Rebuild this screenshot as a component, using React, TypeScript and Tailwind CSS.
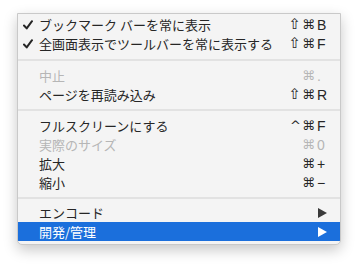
import React from "react";

type Item =
  | { sep: true; h: number }
  | {
      sep?: false;
      label: string;
      check?: boolean;
      disabled?: boolean;
      mods?: string;
      key?: string;
      arrow?: boolean;
      active?: boolean;
    };

const items: Item[] = [
  { label: "ブックマーク バーを常に表示", check: true, mods: "⇧⌘", key: "B" },
  { label: "全画面表示でツールバーを常に表示する", check: true, mods: "⇧⌘", key: "F" },
  { sep: true, h: 13 },
  { label: "中止", disabled: true, mods: "⌘", key: "." },
  { label: "ページを再読み込み", mods: "⇧⌘", key: "R" },
  { sep: true, h: 12 },
  { label: "フルスクリーンにする", mods: "^⌘", key: "F" },
  { label: "実際のサイズ", disabled: true, mods: "⌘", key: "0" },
  { label: "拡大", mods: "⌘", key: "+" },
  { label: "縮小", mods: "⌘", key: "−" },
  { sep: true, h: 11 },
  { label: "エンコード", arrow: true },
  { label: "開発/管理", arrow: true, active: true },
];

function Check() {
  return (
    <svg width="10" height="10" viewBox="0 0 10 10" className="block">
      <path d="M1 5.5 L3.7 8.4 L9 1.2" fill="none" stroke="currentColor" strokeWidth="2" strokeLinecap="round" strokeLinejoin="round" />
    </svg>
  );
}

function Arrow() {
  return (
    <svg width="9" height="10" viewBox="0 0 9 10" className="block">
      <polygon points="0,0 9,5 0,10" fill="currentColor" />
    </svg>
  );
}

function Mod({ c }: { c: string }) {
  if (c === "⇧") return <span className="text-[15px] leading-none">⇧</span>;
  return <span className="text-[13px] leading-none">{c}</span>;
}

export default function App() {
  return (
    <div className="w-[357px] h-[268px] bg-white pt-[13px] pl-[17px]" style={{ fontFamily: '"Noto Sans CJK JP", "Noto Sans", sans-serif' }}>
      <div className="w-[324px] bg-[#f4f4f4] border border-[#c9c9c9] rounded-b-[5px] shadow-[0_5px_14px_rgba(0,0,0,0.22)] pt-[1px] pb-[3px] overflow-hidden">
        {items.map((it, i) => {
          if (it.sep) {
            const hc = it.h === 13 ? "h-[13px] pt-[1px]" : it.h === 12 ? "h-[12px]" : "h-[11px]";
            return (
              <div key={i} className={`flex items-center ${hc}`}>
                <div className="h-[2px] w-full bg-[#e2e2e2]" />
              </div>
            );
          }
          const color = it.active ? "text-white bg-[#1b6fdc]" : it.disabled ? "text-[#b6b6b6]" : "text-[#262626]";
          return (
            <div key={i} className={`h-[19px] flex items-center pl-[5px] pr-[12px] text-[13px] leading-none ${color}`}>
              <div className="w-[16px] flex items-center">{it.check ? <Check /> : null}</div>
              <div className="flex-1 whitespace-nowrap">{it.label}</div>
              {it.mods ? (
                <div className="flex items-center" style={{ fontFamily: '"DejaVu Sans", sans-serif' }}>
                  <span className="flex items-center gap-[1px] pr-[2px]">
                    {it.mods.split("").map((c, j) => (
                      <Mod key={j} c={c} />
                    ))}
                  </span>
                  <span className="w-[11px] text-left text-[14px] leading-none" style={{ fontFamily: '"Liberation Sans", sans-serif' }}>{it.key}</span>
                </div>
              ) : null}
              {it.arrow ? (
                <div className={`w-[11px] flex justify-start pl-[1px] ${it.active ? "text-white" : "text-[#3a3a3a]"}`}>
                  <Arrow />
                </div>
              ) : null}
            </div>
          );
        })}
      </div>
    </div>
  );
}
